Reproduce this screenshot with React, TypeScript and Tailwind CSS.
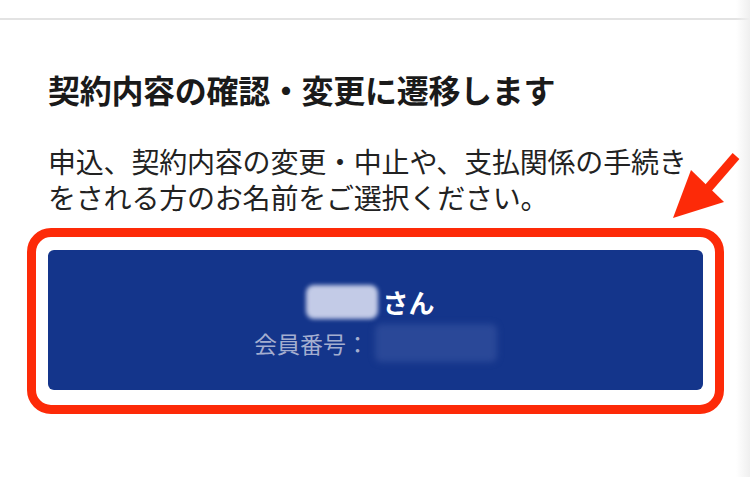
import React from "react";

export default function App() {
  return (
    <div
      className="relative w-[750px] h-[477px] bg-white overflow-hidden flex flex-col"
      style={{ fontFamily: '"Noto Sans CJK JP", "Noto Sans", sans-serif' }}
    >
      <div className="h-[18px] shrink-0" />
      <div className="h-[2px] bg-[#e3e3e3] shrink-0" />

      <h1 className="mt-[53px] pl-[48px] text-[32px] leading-[32px] font-bold text-[#1a1a1a] tracking-[-0.3px]">
        契約内容の確認・変更に遷移します
      </h1>

      <p className="mt-[38px] pl-[48px] pr-[40px] text-[28px] leading-[36px] text-[#222222] tracking-[-0.2px]">
        申込、契約内容の変更・中止や、支払関係の手続き
        <br />
        をされる方のお名前をご選択ください。
      </p>

      <div className="mt-[13px] ml-[27px] w-[697px] border-[9px] border-[#fd2a08] rounded-[24px] px-[12px] pt-[13px] pb-[15px]">
        <div className="h-[140px] rounded-[6px] bg-[#14358b] flex flex-col items-center justify-center gap-[9px] pt-[2px]">
          <div className="flex items-center h-[34px] -ml-[10px]">
            <div className="w-[72px] h-[34px] rounded-[8px] bg-[#c3cbe7] blur-[2px]" />
            <span className="ml-[4px] text-[26px] leading-[34px] font-bold text-white">
              さん
            </span>
          </div>
          <div className="flex items-center h-[30px]">
            <span className="text-[23px] leading-[30px] text-[#a4aed0]">
              会員番号：
            </span>
            <div className="ml-[6px] w-[122px] h-[38px] rounded-[6px] bg-[#2a4898] blur-[3px]" />
          </div>
        </div>
      </div>

      <div className="absolute top-0 right-0 h-full w-[14px] bg-gradient-to-r from-transparent to-[#efefef]" />

      <svg
        className="absolute left-[660px] top-[145px]"
        width="90"
        height="85"
        viewBox="0 0 90 85"
      >
        <line x1="76" y1="11" x2="44" y2="48" stroke="#fd2a08" strokeWidth="9" />
        <polygon points="13,73 31,25 64,57" fill="#fd2a08" />
      </svg>
    </div>
  );
}
